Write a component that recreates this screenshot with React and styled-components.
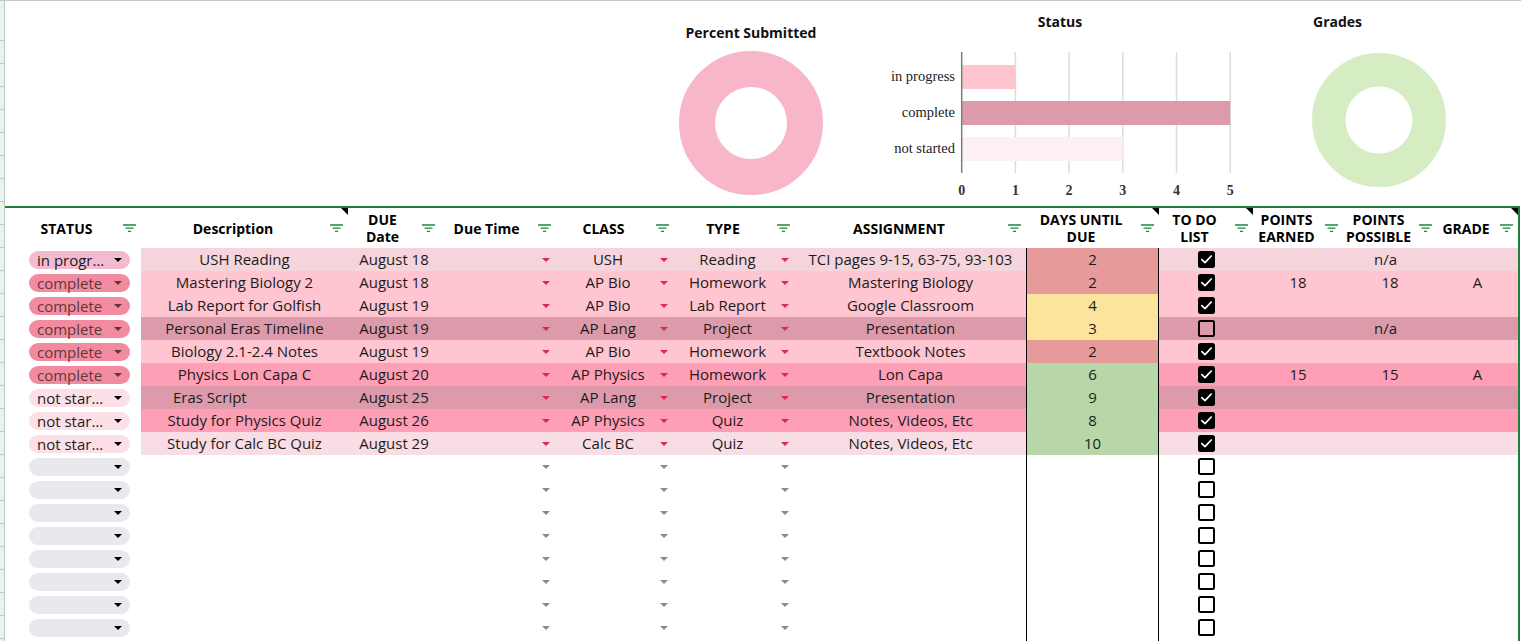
import React from "react";
import styled, { createGlobalStyle } from "styled-components";

const GlobalStyle = createGlobalStyle`
  *, *::before, *::after { box-sizing: border-box; }
  html, body { margin: 0; padding: 0; background: #fff; }
  body { font-family: "Open Sans", "DejaVu Sans", sans-serif; color: #1c1c1c; }
  #root { width: 1521px; height: 641px; overflow: hidden; }
`;

const COLS = "136px 207px 92px 116px 118px 121px 231px 133px 94px 90px 94px 81px";
const GREEN = "#1d7f3a";

const Sheet = styled.div`
  display: flex;
  width: 1521px;
  height: 641px;
  border-top: 1px solid #c7c7c7;
  overflow: hidden;
  background: #fff;
`;

const Gutter = styled.div`
  flex: none;
  width: 5px;
  border-right: 1px solid #c4c4c4;
  background-color: #e6f4ea;
  background-image: repeating-linear-gradient(to bottom, transparent 0 22px, #c9c9c9 22px 23px);
  background-position: 0 17px;
`;

const Main = styled.div`
  flex: none;
  width: 1516px;
  display: flex;
  flex-direction: column;
`;

/* ---------- charts ---------- */
const ChartsRow = styled.div`
  flex: none;
  height: 205px;
  display: flex;
  align-items: flex-start;
  padding-left: 666px;
`;

const ChartPanel = styled.div`
  flex: none;
  width: ${(p) => p.$w}px;
  margin-left: ${(p) => p.$ml || 0}px;
  display: flex;
  flex-direction: column;
  align-items: ${(p) => (p.$center ? "center" : "flex-start")};
`;

const ChartTitle = styled.div`
  font-weight: 700;
  font-size: 14px;
  line-height: 20px;
  color: #111;
  margin-top: ${(p) => p.$mt}px;
  padding-left: ${(p) => p.$pl || 0}px;
  align-self: ${(p) => (p.$pl ? "flex-start" : "center")};
`;

const ChartBox = styled.div`
  margin-top: ${(p) => p.$mt}px;
  margin-left: ${(p) => p.$ml || 0}px;
  line-height: 0;
`;

function Donut({ size, ring, color }) {
  const r = size / 2 - ring / 2;
  return (
    <svg width={size} height={size} viewBox={`0 0 ${size} ${size}`}>
      <circle cx={size / 2} cy={size / 2} r={r} fill="none" stroke={color} strokeWidth={ring} />
    </svg>
  );
}

const BARS = [
  { label: "in progress", value: 1, color: "#fec5cf", y: 25 },
  { label: "complete", value: 5, color: "#dd9aab", y: 61 },
  { label: "not started", value: 3, color: "#fdf0f3", y: 97 },
];

function StatusChart() {
  const x0 = 101.7;
  const unit = 53.7;
  return (
    <svg width="400" height="165" viewBox="0 0 400 165">
      {[1, 2, 3, 4, 5].map((i) => (
        <line key={i} x1={x0 + unit * i} x2={x0 + unit * i} y1="12" y2="133" stroke="#dcdcdc" strokeWidth="1.5" />
      ))}
      {BARS.map((b) => (
        <g key={b.label}>
          <rect x={x0} y={b.y} width={unit * b.value} height="24" fill={b.color} />
          <text x="95" y={b.y + 16} textAnchor="end" fontFamily="'Liberation Serif', serif" fontSize="14.5" fill="#222">
            {b.label}
          </text>
        </g>
      ))}
      <line x1={x0} x2={x0} y1="12" y2="133" stroke="#7d7d7d" strokeWidth="1.5" />
      {[0, 1, 2, 3, 4, 5].map((i) => (
        <text key={i} x={x0 + unit * i} y="155" textAnchor="middle" fontFamily="'Liberation Serif', serif" fontWeight="700" fontSize="14" fill="#333">
          {i}
        </text>
      ))}
    </svg>
  );
}

/* ---------- table ---------- */
const Table = styled.div`
  flex: none;
  width: 1515px;
  border-top: 2px solid ${GREEN};
  border-right: 2px solid ${GREEN};
  display: flex;
  flex-direction: column;
`;

const HeaderRow = styled.div`
  display: grid;
  grid-template-columns: ${COLS};
  height: 40px;
  background: #fff;
`;

const HeaderCell = styled.div`
  position: relative;
  display: flex;
  align-items: center;
`;

const HeaderLabel = styled.div`
  flex: 1;
  text-align: center;
  font-weight: 700;
  font-size: 14px;
  line-height: 17px;
  color: #000;
  white-space: nowrap;
  padding-left: ${(p) => p.$pl || 0}px;
`;

const FilterIcon = styled.svg`
  flex: none;
  width: 13px;
  height: 9px;
  margin: 0 5px 0 5px;
`;

const NoteMark = styled.span`
  position: absolute;
  top: 0;
  right: 0;
  width: 0;
  height: 0;
  border-top: 7px solid #000;
  border-left: 7px solid transparent;
`;

const Row = styled.div`
  display: grid;
  grid-template-columns: ${COLS};
  height: 23px;
  background: ${(p) => p.$bg || "#fff"};
  font-size: 15px;
  line-height: 23px;
`;

const StatusCell = styled.div`
  background: #fff;
  display: flex;
  align-items: center;
  padding-left: 24px;
`;

const Chip = styled.div`
  width: 101px;
  height: 18px;
  border-radius: 9px;
  background: ${(p) => p.$bg};
  color: ${(p) => p.$fg};
  display: flex;
  align-items: center;
  gap: 6px;
  padding: 0 8px;
  font-size: 15px;
  line-height: 18px;
`;

const ChipText = styled.span`
  flex: 1;
  min-width: 0;
  white-space: nowrap;
`;

const Caret = styled.span`
  flex: none;
  width: 0;
  height: 0;
  border-left: ${(p) => p.$w / 2}px solid transparent;
  border-right: ${(p) => p.$w / 2}px solid transparent;
  border-top: ${(p) => p.$h}px solid ${(p) => p.$color};
  margin-right: ${(p) => p.$mr || 0}px;
`;

const TextCell = styled.div`
  display: flex;
  align-items: center;
  justify-content: ${(p) => (p.$left ? "flex-start" : "center")};
  padding-left: ${(p) => p.$pl || 0}px;
  white-space: nowrap;
  grid-column: span ${(p) => p.$span || 1};
`;

const DropCell = styled.div`
  display: flex;
  align-items: center;
`;

const DropValue = styled.span`
  flex: 1;
  text-align: center;
  white-space: nowrap;
`;

const DaysCell = styled.div`
  background: ${(p) => p.$bg || "#fff"};
  border-left: 1px solid #000;
  border-right: 1px solid #000;
  text-align: center;
`;

const CheckCell = styled.div`
  display: flex;
  align-items: center;
  justify-content: center;
`;

const Box = styled.div`
  width: 17px;
  height: 17px;
  border-radius: 2.5px;
  border: 2px solid #000;
  background: ${(p) => (p.$checked ? "#000" : "transparent")};
  display: flex;
  align-items: center;
  justify-content: center;
`;

function Checkbox({ checked }) {
  return (
    <Box $checked={checked}>
      {checked && (
        <svg width="13" height="13" viewBox="0 0 13 13">
          <path d="M1.8 6.6 L5 9.6 L11.2 3" fill="none" stroke="#fff" strokeWidth="1.7" strokeLinecap="round" strokeLinejoin="round" />
        </svg>
      )}
    </Box>
  );
}

const CHIP = {
  "in progress": { bg: "#f4bad0", fg: "#1c1c1c", caret: "#000", short: "in progr…" },
  complete: { bg: "#f38ba0", fg: "#5b393b", caret: "#5b393b", short: "complete" },
  "not started": { bg: "#fde0e7", fg: "#1c1c1c", caret: "#000", short: "not star…" },
  "": { bg: "#e8e9ec", fg: "#000", caret: "#000", short: "" },
};

const CLASS_BG = {
  USH: "#f5d4dc",
  "AP Bio": "#ffc5d0",
  "AP Lang": "#dd9aaa",
  "AP Physics": "#fe9fb6",
  "Calc BC": "#f9dde4",
};

const daysBg = (d) => (d <= 2 ? "#e69a9a" : d <= 4 ? "#fde49c" : "#b7d7a8");

const ROWS = [
  { status: "in progress", desc: "USH Reading", date: "August 18", cls: "USH", type: "Reading", asg: "TCI pages 9-15, 63-75, 93-103", days: 2, done: true, na: true },
  { status: "complete", desc: "Mastering Biology 2", date: "August 18", cls: "AP Bio", type: "Homework", asg: "Mastering Biology", days: 2, done: true, pts: ["18", "18", "A"] },
  { status: "complete", desc: "Lab Report for Golfish", date: "August 19", cls: "AP Bio", type: "Lab Report", asg: "Google Classroom", days: 4, done: true },
  { status: "complete", desc: "Personal Eras Timeline", date: "August 19", cls: "AP Lang", type: "Project", asg: "Presentation", days: 3, done: false, na: true },
  { status: "complete", desc: "Biology 2.1-2.4 Notes", date: "August 19", cls: "AP Bio", type: "Homework", asg: "Textbook Notes", days: 2, done: true },
  { status: "complete", desc: "Physics Lon Capa C", date: "August 20", cls: "AP Physics", type: "Homework", asg: "Lon Capa", days: 6, done: true, pts: ["15", "15", "A"] },
  { status: "not started", desc: "Eras Script", date: "August 25", cls: "AP Lang", type: "Project", asg: "Presentation", days: 9, done: true, left: true },
  { status: "not started", desc: "Study for Physics Quiz", date: "August 26", cls: "AP Physics", type: "Quiz", asg: "Notes, Videos, Etc", days: 8, done: true },
  { status: "not started", desc: "Study for Calc BC Quiz", date: "August 29", cls: "Calc BC", type: "Quiz", asg: "Notes, Videos, Etc", days: 10, done: true },
];

const HEADERS = [
  { label: "STATUS", pl: 10 },
  { label: "Description", note: true },
  { label: ["DUE", "Date"] },
  { label: "Due Time" },
  { label: "CLASS" },
  { label: "TYPE" },
  { label: "ASSIGNMENT" },
  { label: ["DAYS UNTIL", "DUE"], note: true },
  { label: ["TO DO", "LIST"], note: true },
  { label: ["POINTS", "EARNED"] },
  { label: ["POINTS", "POSSIBLE"] },
  { label: "GRADE", note: true },
];

function Filter() {
  return (
    <FilterIcon viewBox="0 0 13 9">
      <path d="M0 1h13M2.5 4.2h8M5 7.4h3" stroke="#1a8a3c" strokeWidth="1.3" fill="none" />
    </FilterIcon>
  );
}

function StatusChip({ status }) {
  const chip = CHIP[status];
  return (
    <Chip $bg={chip.bg} $fg={chip.fg} title={status}>
      <ChipText>{chip.short}</ChipText>
      <Caret $w={8} $h={4} $color={chip.caret} />
    </Chip>
  );
}

function DataRow({ r }) {
  return (
    <Row $bg={CLASS_BG[r.cls]}>
      <StatusCell>
        <StatusChip status={r.status} />
      </StatusCell>
      <TextCell $left={r.left} $pl={r.left ? 32 : 0}>{r.desc}</TextCell>
      <TextCell>{r.date}</TextCell>
      <DropCell>
        <DropValue />
        <Caret $w={9} $h={4} $color="#e0284f" $mr={6} />
      </DropCell>
      <DropCell>
        <DropValue>{r.cls}</DropValue>
        <Caret $w={9} $h={4} $color="#e0284f" $mr={6} />
      </DropCell>
      <DropCell>
        <DropValue>{r.type}</DropValue>
        <Caret $w={9} $h={4} $color="#e0284f" $mr={6} />
      </DropCell>
      <TextCell>{r.asg}</TextCell>
      <DaysCell $bg={daysBg(r.days)}>{r.days}</DaysCell>
      <CheckCell>
        <Checkbox checked={r.done} />
      </CheckCell>
      {r.na ? (
        <TextCell $span={3}>n/a</TextCell>
      ) : r.pts ? (
        r.pts.map((p, i) => <TextCell key={i}>{p}</TextCell>)
      ) : (
        <TextCell $span={3} />
      )}
    </Row>
  );
}

function EmptyRow() {
  return (
    <Row>
      <StatusCell>
        <StatusChip status="" />
      </StatusCell>
      <TextCell />
      <TextCell />
      <DropCell>
        <DropValue />
        <Caret $w={9} $h={4} $color="#8a8a8a" $mr={6} />
      </DropCell>
      <DropCell>
        <DropValue />
        <Caret $w={9} $h={4} $color="#8a8a8a" $mr={6} />
      </DropCell>
      <DropCell>
        <DropValue />
        <Caret $w={9} $h={4} $color="#8a8a8a" $mr={6} />
      </DropCell>
      <TextCell />
      <DaysCell />
      <CheckCell>
        <Checkbox checked={false} />
      </CheckCell>
      <TextCell $span={3} />
    </Row>
  );
}

export default function App() {
  return (
    <>
      <GlobalStyle />
      <Sheet>
        <Gutter />
        <Main>
          <ChartsRow>
            <ChartPanel $w={160} $center>
              <ChartTitle $mt={22}>Percent Submitted</ChartTitle>
              <ChartBox $mt={8}>
                <Donut size={144} ring={36} color="#f7b7c9" />
              </ChartBox>
            </ChartPanel>
            <ChartPanel $w={400} $ml={29}>
              <ChartTitle $mt={11}>Status</ChartTitle>
              <ChartBox $mt={8}>
                <StatusChart />
              </ChartBox>
            </ChartPanel>
            <ChartPanel $w={261}>
              <ChartTitle $mt={11} $pl={53}>Grades</ChartTitle>
              <ChartBox $mt={21} $ml={52}>
                <Donut size={134} ring={33.5} color="#d6edc3" />
              </ChartBox>
            </ChartPanel>
          </ChartsRow>
          <Table>
            <HeaderRow>
              {HEADERS.map((h, i) => (
                <HeaderCell key={i}>
                  <HeaderLabel $pl={h.pl}>
                    {Array.isArray(h.label) ? (
                      <>
                        {h.label[0]}
                        <br />
                        {h.label[1]}
                      </>
                    ) : (
                      h.label
                    )}
                  </HeaderLabel>
                  <Filter />
                  {h.note && <NoteMark />}
                </HeaderCell>
              ))}
            </HeaderRow>
            {ROWS.map((r, i) => (
              <DataRow key={i} r={r} />
            ))}
            {Array.from({ length: 9 }).map((_, i) => (
              <EmptyRow key={"e" + i} />
            ))}
          </Table>
        </Main>
      </Sheet>
    </>
  );
}
